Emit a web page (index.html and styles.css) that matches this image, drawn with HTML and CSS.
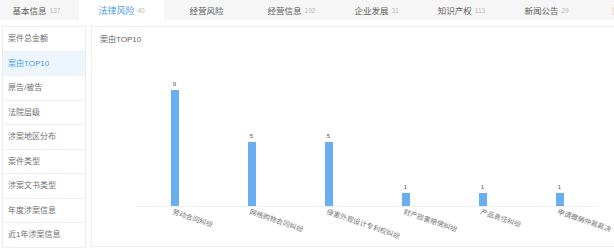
FILE: index.html
```html
<!DOCTYPE html>
<html lang="zh-CN">
<head>
  <meta charset="UTF-8">
  <title>法律风险</title>
  <link rel="stylesheet" href="styles.css">
</head>
<body>

  <div class="tabs">
    <div class="tab">基本信息 <span class="count">137</span></div>
    <div class="tab active">法律风险 <span class="count">40</span></div>
    <div class="tab">经营风险</div>
    <div class="tab">经营信息 <span class="count">192</span></div>
    <div class="tab">企业发展 <span class="count">31</span></div>
    <div class="tab">知识产权 <span class="count">113</span></div>
    <div class="tab">新闻公告 <span class="count">29</span></div>
    <div class="tab history">历史信息</div>
  </div>

  <div class="main">
    <ul class="menu">
      <li>案件总金额</li>
      <li class="active">案由TOP10</li>
      <li>原告/被告</li>
      <li>法院层级</li>
      <li>涉案地区分布</li>
      <li>案件类型</li>
      <li>涉案文书类型</li>
      <li>年度涉案信息</li>
      <li>近1年涉案信息</li>
    </ul>

    <div class="panel">
      <div class="panel-title">案由TOP10</div>
      <div class="chart" id="chart"></div>
      <div class="labels" id="labels"></div>
    </div>
  </div>

  <script>
    const data = [
      { name: '劳动合同纠纷', value: 9 },
      { name: '网络购物合同纠纷', value: 5 },
      { name: '侵害外观设计专利权纠纷', value: 5 },
      { name: '财产损害赔偿纠纷', value: 1 },
      { name: '产品责任纠纷', value: 1 },
      { name: '申请撤销仲裁裁决', value: 1 }
    ];

    const chart = document.getElementById('chart');
    const labels = document.getElementById('labels');

    data.forEach(item => {
      const col = document.createElement('div');
      col.className = 'col';
      col.innerHTML = `<span class="val">${item.value}</span>
        <div class="bar" style="height:${(item.value / 9 * 116).toFixed(1)}px"></div>`;
      chart.appendChild(col);

      const label = document.createElement('div');
      label.className = 'label';
      label.innerHTML = `<span>${item.name}</span>`;
      labels.appendChild(label);
    });
  </script>

</body>
</html>
```

FILE: styles.css
```css
body {
  margin: 0;
  padding: 0;
  width: 614px;
  height: 251px;
  overflow: hidden;
  font-family: 'Liberation Sans', 'Noto Sans CJK SC', sans-serif;
  background: #fff;
  color: #555;
}

.tabs {
  display: flex;
  height: 20px;
  margin-left: -6px;
  width: 700px;
  background: #f6f6f6;
}

.tab {
  flex: 0 0 85px;
  display: flex;
  justify-content: center;
  align-items: center;
  gap: 3px;
  font-size: 8.5px;
  color: #606060;
  white-space: nowrap;
}

.tab .count {
  font-size: 6.5px;
  color: #bbb;
}

.tab.active {
  background: #fff;
  color: #4a9be8;
  font-size: 9px;
}

.tab.history {
  color: #eccba6;
  justify-content: flex-start;
  padding-left: 23px;
}

.main {
  display: flex;
  gap: 5px;
  padding: 6px 0 0 2px;
  width: 640px;
}

.menu {
  flex: 0 0 82px;
  list-style: none;
  margin: 0;
  padding: 0;
  border: 1px solid #e9eff5;
}

.menu li {
  height: 23.5px;
  line-height: 23.5px;
  padding-left: 5px;
  font-size: 8px;
  color: #707070;
  white-space: nowrap;
  border-bottom: 1px solid #edf1f6;
}

.menu li:last-child {
  border-bottom: none;
}

.menu li.active {
  background: #eef6fd;
  color: #4b9de9;
}

.panel {
  flex: 1;
  height: 219px;
  border: 1px solid #eeeeee;
}

.panel-title {
  padding: 7px 0 0 8px;
  font-size: 8px;
  line-height: 12px;
  color: #666;
}

.chart {
  display: flex;
  align-items: flex-end;
  margin: 24px 0 0 44px;
  width: 462px;
  height: 136px;
  border-bottom: 1px solid #f0f0f0;
}

.col {
  flex: 0 0 77px;
  display: flex;
  flex-direction: column;
  align-items: center;
}

.val {
  font-size: 6px;
  line-height: 7px;
  margin-bottom: 2px;
  color: #555;
}

.bar {
  width: 8px;
  background: #68aef0;
}

.labels {
  display: flex;
  margin: 1px 0 0 44px;
}

.label {
  flex: 0 0 77px;
  min-width: 0;
  padding-left: 38px;
  box-sizing: border-box;
  font-size: 7px;
  line-height: 8px;
  color: #777;
  white-space: nowrap;
}

.label span {
  display: inline-block;
  transform: rotate(19deg);
  transform-origin: left top;
}
```
